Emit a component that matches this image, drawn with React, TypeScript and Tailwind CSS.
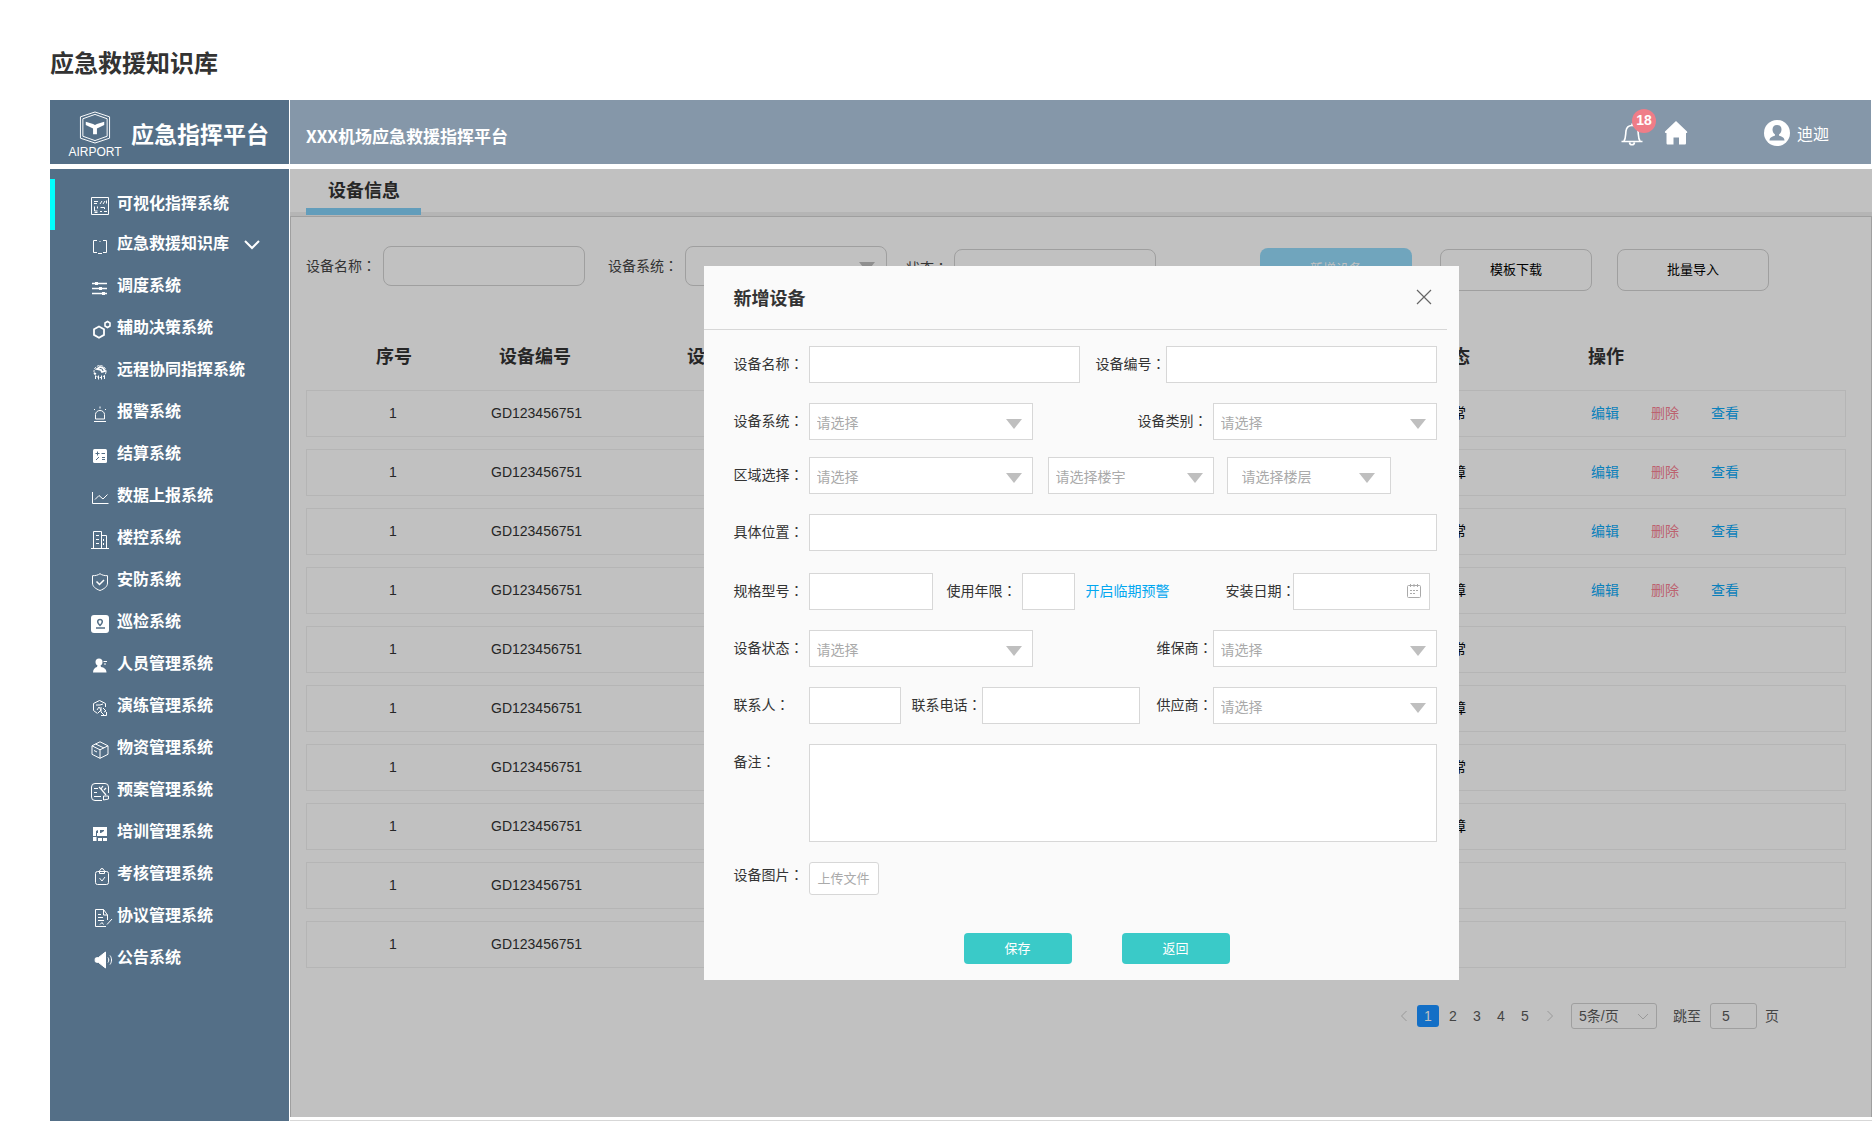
import React from "react";

type IconProps = { children: React.ReactNode; solid?: boolean };

function Icon({ children, solid }: IconProps) {
  return (
    <svg
      viewBox="0 0 18 18"
      className="size-[18px] shrink-0 overflow-visible"
      fill={solid ? "currentColor" : "none"}
      stroke={solid ? "none" : "currentColor"}
      strokeWidth="1"
      aria-hidden="true"
    >
      {children}
    </svg>
  );
}

const menus = [
  {
    name: "可视化指挥系统",
    icon: (
      <Icon>
        <path d="M.5.5h17v17H.5z" />
        <path d="M3 4.500h4M3 6.500h3M9 7l2-3M12 7l2-3M15.500 3.500v3M3.500 9.500v4.500h3M6.500 9.500v2M9.500 10.500h4v1.500M9 14.500h2M13 14.500h3M3.500 15.500h3" />
      </Icon>
    ),
  },
  {
    name: "应急救援知识库",
    open: true,
    icon: (
      <Icon>
        <path d="M6 3.500H2.500v12H6M12 3.500h3.500v12H12M7 16.500h4M8.500 4.500h1" />
      </Icon>
    ),
  },
  {
    name: "调度系统",
    icon: (
      <Icon>
        <path strokeWidth="1.500" d="M1 4.500h15M1 9.500h15M1 14.500h15" />
        <path strokeWidth="3" d="M4 4.500h3M8 9.500h3M11 14.500h3" />
      </Icon>
    ),
  },
  {
    name: "辅助决策系统",
    icon: (
      <Icon>
        <path strokeWidth="1.800" d="M8 5.500l5 2.800v5.600L8 16.700l-5-2.800V8.300z" />
        <path strokeWidth="1.600" d="M16.500.5l2.500 1.500v3l-2.500 1.500L14 5V2z" />
      </Icon>
    ),
  },
  {
    name: "远程协同指挥系统",
    icon: (
      <Icon>
        <circle cx="9" cy="8.500" r="6" strokeDasharray="2.500 1" />
        <path strokeWidth="1.800" d="M6 6l3-2 3 1 2 3-3 1-1-2zM3 10l2 1" />
        <path d="M4.500 13v3M7.500 12.500v4M10.500 12.500v4M13.500 13v3" />
      </Icon>
    ),
  },
  {
    name: "报警系统",
    icon: (
      <Icon>
        <path d="M3 16.500h12M4.500 14V9.500a4.500 4 0 0 1 9 0V14zM9 1.500v2M3 4l1 1M15 4l-1 1" />
      </Icon>
    ),
  },
  {
    name: "结算系统",
    icon: (
      <Icon>
        <rect x="2" y="2" width="14" height="14" rx="1.500" fill="currentColor" stroke="none" />
        <path stroke="#546f87" d="M4.500 6.500h4M6.500 4.500v4M10.500 6.500h3.500M5 13l3-3M11 10.500h3M11 12.500h3" />
      </Icon>
    ),
  },
  {
    name: "数据上报系统",
    icon: (
      <Icon>
        <path d="M1.500 3v11.500h16M4 10.500l4-4 4 3.500 4.500-4.500" />
      </Icon>
    ),
  },
  {
    name: "楼控系统",
    icon: (
      <Icon>
        <path d="M0 17.500h18M2.500 17V.5h8V17M10.500 4.500h5V17M5 4.500h3M5 8.500h3M5 12.500h3M12.500 8v2M12.500 12v2" />
      </Icon>
    ),
  },
  {
    name: "安防系统",
    icon: (
      <Icon>
        <path d="M9 .7c2 1.500 4.500 2 7.500 2V10c0 3.500-3 5.800-7.500 7.500C4.500 15.800 1.500 13.500 1.500 10V2.700c3 0 5.500-.5 7.500-2z" />
        <path strokeWidth="1.500" d="M5.500 8.500l3 3 4.500-4.500" />
      </Icon>
    ),
  },
  {
    name: "巡检系统",
    icon: (
      <Icon>
        <rect width="18" height="18" rx="3" fill="currentColor" stroke="none" />
        <path stroke="#546f87" strokeWidth="1.500" d="M9 10.500C5 6.500 7 4.500 9 4.500s4 2 0 6zM5 13h9" />
      </Icon>
    ),
  },
  {
    name: "人员管理系统",
    icon: (
      <Icon solid>
        <circle cx="8" cy="5" r="3.500" />
        <path d="M6.500 8h3l.5 2c3 .5 5.500 2 5.500 5.500H2C2 12 4 10.500 6 10zM12.500 4H16v1h-3.500zM13 6.500h2v1h-2z" />
      </Icon>
    ),
  },
  {
    name: "演练管理系统",
    icon: (
      <Icon>
        <path d="M14.500 8V4.500L8.500 1.500l-6 3v7l4 3M5 6h4l3-1M6 11l2-3 2 3-3 3M10 8v5l3 3M12 9l3 3-2 1M10 16.500h5.500V13" />
      </Icon>
    ),
  },
  {
    name: "物资管理系统",
    icon: (
      <Icon>
        <path d="M9 .8l8 4v8.500l-8 4-8-4V4.800zM1 4.800l8 4 8-4M9 8.800v8.500M4.500 3l8.500 4M3 9.500l3 1.500" />
      </Icon>
    ),
  },
  {
    name: "预案管理系统",
    icon: (
      <Icon>
        <path d="M11 17.500H4A3.500 3.500 0 0 1 .5 14V4A3.500 3.500 0 0 1 4 .5h10A3.500 3.500 0 0 1 17.500 4v6M3 5.500h4M3 9.500h3M3 13.500h7M12.500 17V13h5v3z" />
        <path strokeWidth="1.200" d="M8 4l3 3M12 3l-2 3 5 6M13 7l2-2" />
      </Icon>
    ),
  },
  {
    name: "培训管理系统",
    icon: (
      <Icon solid>
        <path fillRule="evenodd" d="M2 2h14v9H2zM5 6v5h1V8h1V5zM9 5h4v1l-3 2H9z" />
        <path d="M2 12h3.500v4H2zM7 13h4v3H7zM12 13h4v3h-4z" />
      </Icon>
    ),
  },
  {
    name: "考核管理系统",
    icon: (
      <Icon>
        <rect x="4.500" y="4.500" width="13" height="13" rx="2" />
        <path d="M8.500 6.500V4c0-1 1-1 1-1a1.500 1.500 0 0 1 3 0s1 0 1 1v2.500zM8.500 11l2.500 3 3-4" />
      </Icon>
    ),
  },
  {
    name: "协议管理系统",
    icon: (
      <Icon>
        <path d="M16.500 11V6L12.500.5h-8v17H15M12.500.5V6h4M7 5.500h3M7 8.500h5M7 11.500h6M9 15.500l2-2 1.500 2M16 15.500l5-5.500" />
      </Icon>
    ),
  },
  {
    name: "公告系统",
    icon: (
      <Icon>
        <path fill="currentColor" d="M4.500 7l3-.5 7-5.500v16l-7-5.500-3-.5c-.5-1-.5-3 0-4z" />
        <path d="M17 6.500c1 1.500 1 3.500 0 5M19 4.500c2 2.500 2 6.500 0 9" />
      </Icon>
    ),
  },
];

const rows = ["正常", "故障", "正常", "故障", "正常", "故障", "正常", "故障", "", ""];

function Label({ text, htmlFor, className = "" }: { text: string; htmlFor?: string; className?: string }) {
  return (
    <label htmlFor={htmlFor} className={`shrink-0 whitespace-nowrap pb-[3px] text-sm ${className}`}>
      {text}
      <span className="font-['Noto_Sans_CJK_JP',sans-serif]">：</span>
    </label>
  );
}

function TextBox({ id, className = "" }: { id: string; className?: string }) {
  return (
    <input
      id={id}
      type="text"
      className={`h-[37px] min-w-0 border border-[#d7d7d7] bg-white px-2 text-sm outline-none ${className}`}
    />
  );
}

type SelectBoxProps = { id: string; text?: string; label?: string; inset?: boolean; className?: string };

function SelectBox({ id, text = "请选择", label, inset, className = "" }: SelectBoxProps) {
  return (
    <div className={`relative h-[37px] shrink-0 ${className}`}>
      <select
        id={id}
        aria-label={label}
        className={`size-full appearance-none border border-[#d7d7d7] bg-white text-sm text-[#aaa] outline-none ${
          inset ? "px-[14px]" : "px-[7px]"
        }`}
      >
        <option>{text}</option>
      </select>
      <svg
        viewBox="0 0 16 10"
        className={`pointer-events-none absolute top-4 h-[10px] w-4 ${inset ? "right-4" : "right-[11px]"}`}
        aria-hidden="true"
      >
        <path d="M0 0h16L8 10z" fill="#bfbfbf" />
      </svg>
    </div>
  );
}

function Header() {
  return (
    <header className="flex h-16 gap-px pr-px text-white">
      <div className="flex w-[239px] shrink-0 items-center bg-[#546f87] pl-[18px]">
        <div className="flex w-[54px] flex-col items-center pt-[7px]">
          <svg viewBox="0 0 32 34" className="h-[33px] w-8" fill="none" stroke="currentColor" aria-hidden="true">
            <path strokeWidth="1" d="M16 1l15 5v22l-15 5-15-5V6z" />
            <path strokeWidth="1" d="M16 3.500l12.500 4.500v18L16 30.500 3.500 26V8z" />
            <path fill="currentColor" stroke="none" d="M6.500 11l7.500 2.500 2 1 2-1 7.500-2.500v3.500L18 18v6h-4v-6l-7.500-3.500z" />
          </svg>
          <span className="font-['Liberation_Sans',sans-serif] text-xs leading-[16px]">AIRPORT</span>
        </div>
        <span className="pl-[9px] pt-[3px] text-[23px] font-bold leading-none">应急指挥平台</span>
      </div>
      <div className="flex min-w-0 flex-1 items-center bg-[#8597a9] pl-4 pr-[42px] pt-[2px]">
        <h2 className="pt-[6px] text-[17px] font-bold">XXX机场应急救援指挥平台</h2>
        <button type="button" aria-label="消息" className="relative ml-auto size-[22px]">
          <svg viewBox="0 0 22 24" className="h-6 w-[22px]" fill="none" stroke="currentColor" strokeWidth="1.600" aria-hidden="true">
            <path d="M.5 19.500h21M3 19c2-3 1.500-7 2-10C5.500 5 8 3.500 11 3.500s5.500 1.500 6 5.500c.5 3 0 7 2 10M8.500 20.500c.5 3 4.500 3 5 0M11 1.500v2" />
          </svg>
          <span className="absolute -top-[13px] left-[11px] flex size-6 items-center justify-center rounded-full bg-[#ef7d88] pb-[2px] font-['Liberation_Sans',sans-serif] text-sm font-bold">
            18
          </span>
        </button>
        <a href="#home" aria-label="首页" className="ml-[21px]">
          <svg viewBox="0 0 24 24" className="size-6" fill="currentColor" aria-hidden="true">
            <path d="M12 0l11 10.500c.8 1-.2 1.500-1 1.500v10c0 1-.5 1.500-1.500 1.500H15v-7H9.500v7H4c-1 0-1.500-.5-1.500-1.500V12c-1 0-2-.5-1.500-1.500z" />
          </svg>
        </a>
        <a href="#user" className="ml-[76px] flex items-center gap-[7px] text-base">
          <svg viewBox="0 0 26 26" className="size-[26px]" aria-hidden="true">
            <circle cx="13" cy="13" r="13" fill="#fff" />
            <path fill="#8597a9" d="M13 5c3 0 4.500 2 4.500 4.500 0 2-1 4-2.500 5v1c2.500 1 5.500 2 5.500 5h-15c0-3 3-4 5.500-5v-1c-1.500-1-2.500-3-2.500-5C8.500 7 10 5 13 5z" />
          </svg>
          迪迦
        </a>
      </div>
    </header>
  );
}

function Sidebar() {
  return (
    <nav className="relative w-[239px] shrink-0 bg-[#546f87] pb-20 pt-[14px] text-white">
      <span className="absolute left-0 top-[10px] h-[51px] w-[5px] bg-[#00ffff]" />
      <ul>
        {menus.map((item, i) => (
          <li key={item.name} className={i === 0 ? "h-10" : "h-[42px]"}>
            <a href={`#menu-${i}`} className="flex h-10 items-center pl-[41px] text-base font-bold">
              <span className="pt-[5px]">{item.icon}</span>
              <span className="pb-[2px] pl-2">{item.name}</span>
              {item.open && (
                <svg viewBox="0 0 16 10" className="ml-[15px] mt-1 h-[10px] w-4" fill="none" stroke="currentColor" strokeWidth="2" aria-hidden="true">
                  <path d="M1 1l7 7 7-7" />
                </svg>
              )}
            </a>
          </li>
        ))}
      </ul>
    </nav>
  );
}

function Filters() {
  return (
    <div className="flex h-[45px] items-start pl-[15px]">
      <div className="flex h-10 items-center">
        <Label text="设备名称" htmlFor="q-name" className="w-[77px]" />
        <input id="q-name" type="text" className="h-10 w-[202px] rounded-lg border border-[#9f9f9f] px-2 text-sm" />
        <Label text="设备系统" htmlFor="q-system" className="ml-[23px] w-[77px]" />
        <div className="relative h-10 w-[202px]">
          <select id="q-system" className="size-full appearance-none rounded-lg border border-[#9f9f9f]">
            <option></option>
          </select>
          <svg viewBox="0 0 16 10" className="absolute right-3 top-4 h-[10px] w-4" aria-hidden="true">
            <path d="M0 0h16L8 10z" fill="#8f8f8f" />
          </svg>
        </div>
        <Label text="状态" htmlFor="q-status" className="ml-[19px] w-12 pt-1" />
      </div>
      <input id="q-status" type="text" className="mt-[3px] h-10 w-[202px] rounded-lg border border-[#9f9f9f] px-2 text-sm" />
      <div className="ml-[104px] mt-[3px] flex gap-[25px] text-[13px] text-black">
        <button type="button" className="-mt-px mr-[3px] h-[42px] w-[152px] rounded-lg bg-[#70a5bd] pb-[3px] text-[#c1c1c1]">
          新增设备
        </button>
        <button type="button" className="h-[42px] w-[152px] rounded-lg border border-[#9f9f9f] pb-[2px]">模板下载</button>
        <button type="button" className="h-[42px] w-[152px] rounded-lg border border-[#9f9f9f] pb-[2px]">批量导入</button>
      </div>
    </div>
  );
}

function DeviceTable() {
  return (
    <table className="ml-[15px] mr-[25px] mt-[37px] block text-sm text-[#262626]">
      <thead className="block">
        <tr className="flex h-[62px] items-center pb-[9px] text-left text-lg">
          <th className="w-[193px] pl-[70px]">序号</th>
          <th className="w-[188px]">设备编号</th>
          <th className="w-[747px]">设备</th>
          <th className="w-[154px]">状态</th>
          <th>操作</th>
        </tr>
      </thead>
      <tbody className="flex flex-col gap-3">
        {rows.map((status, i) => (
          <tr
            key={i}
            className="flex h-[47px] items-center border border-[#b5b5b5] pb-[2px] font-['Liberation_Sans','Noto_Sans_CJK_SC',sans-serif]"
          >
            <td className="w-[184px] pl-[82px]">1</td>
            <td className="w-[947px]">GD123456751</td>
            <td className="w-[153px] text-black">{status}</td>
            <td className="flex gap-8">
              {i < 4 && (
                <>
                  <a href="#edit" className="text-[#0a80bb]">编辑</a>
                  <a href="#delete" className="text-[#bc6270]">删除</a>
                  <a href="#view" className="text-[#0a80bb]">查看</a>
                </>
              )}
            </td>
          </tr>
        ))}
      </tbody>
    </table>
  );
}

function Pagination() {
  return (
    <div className="mt-[35px] flex h-[26px] items-center justify-end pr-[92px] font-['Liberation_Sans','Noto_Sans_CJK_SC',sans-serif] text-sm text-[#444]">
      <button type="button" aria-label="上一页">
        <svg viewBox="0 0 8 12" className="h-3 w-2" fill="none" stroke="#999" aria-hidden="true">
          <path d="M6.500 1L1.500 6l5 5" />
        </svg>
      </button>
      <button type="button" className="ml-[9px] size-[22px] rounded-[3px] bg-[#136fc6] text-[#c1c1c1]">1</button>
      <div className="ml-[2px] flex">
        {[2, 3, 4, 5].map((n) => (
          <button key={n} type="button" className="w-6">{n}</button>
        ))}
      </div>
      <button type="button" aria-label="下一页" className="ml-[9px]">
        <svg viewBox="0 0 8 12" className="h-3 w-2" fill="none" stroke="#999" aria-hidden="true">
          <path d="M1.500 1l5 5-5 5" />
        </svg>
      </button>
      <div className="relative ml-[17px] h-[26px] w-[86px]">
        <select aria-label="每页条数" className="size-full appearance-none rounded-[3px] border border-[#9f9f9f] pl-[7px] text-sm">
          <option>5条/页</option>
        </select>
        <svg viewBox="0 0 12 8" className="pointer-events-none absolute right-2 top-[10px] h-2 w-3" fill="none" stroke="#999" aria-hidden="true">
          <path d="M1 1l5 5 5-5" />
        </svg>
      </div>
      <label htmlFor="page-no" className="ml-4">跳至</label>
      <input id="page-no" type="text" defaultValue="5" className="ml-[9px] mr-2 h-[26px] w-[47px] rounded-[3px] border border-[#9f9f9f] pl-[11px]" />
      <span>页</span>
    </div>
  );
}

function DeviceModal() {
  return (
    <section role="dialog" aria-label="新增设备" className="h-fit w-[755px] bg-[#fafafa] pb-4 text-[#333]">
      <div className="mr-3 flex h-16 items-center justify-between border-b border-[#d7d7d7] pb-[2px] pl-[30px] pr-[15px]">
        <h3 className="text-lg font-bold">新增设备</h3>
        <button type="button" aria-label="关闭">
          <svg viewBox="0 0 16 16" className="size-4" fill="none" stroke="#666" strokeWidth="1.200" aria-hidden="true">
            <path d="M1 1l14 14M15 1L1 15" />
          </svg>
        </button>
      </div>
      <form className="pl-[30px] pr-[22px] pt-4">
        <div className="flex items-center">
          <Label text="设备名称" htmlFor="name" className="w-[75px]" />
          <TextBox id="name" className="flex-1" />
          <Label text="设备编号" htmlFor="code" className="ml-4" />
          <TextBox id="code" className="flex-1" />
        </div>
        <div className="mt-5 flex items-center">
          <Label text="设备系统" htmlFor="system" className="w-[75px]" />
          <SelectBox id="system" className="w-56" />
          <Label text="设备类别" htmlFor="category" className="ml-auto w-[75px]" />
          <SelectBox id="category" className="w-56" />
        </div>
        <div className="mt-[17px] flex items-center">
          <Label text="区域选择" htmlFor="area" className="w-[75px]" />
          <SelectBox id="area" className="w-56" />
          <SelectBox id="building" text="请选择楼宇" label="楼宇" className="ml-[15px] w-[166px]" />
          <SelectBox id="floor" text="请选择楼层" label="楼层" inset className="ml-[13px] w-[164px]" />
        </div>
        <div className="mt-5 flex items-center">
          <Label text="具体位置" htmlFor="place" className="w-[75px]" />
          <TextBox id="place" className="flex-1" />
        </div>
        <div className="mt-[22px] flex items-center pr-[7px]">
          <Label text="规格型号" htmlFor="model" className="w-[75px]" />
          <TextBox id="model" className="w-[124px]" />
          <Label text="使用年限" htmlFor="years" className="ml-[14px] w-[75px]" />
          <TextBox id="years" className="w-[53px]" />
          <a href="#warning" className="ml-[11px] pb-[3px] text-sm text-[#02a7f0]">开启临期预警</a>
          <Label text="安装日期" htmlFor="date" className="ml-auto w-[67px]" />
          <div className="relative">
            <TextBox id="date" className="block w-[137px]" />
            <svg viewBox="0 0 16 16" className="absolute right-2 top-[10px] size-4" fill="none" stroke="#aaa" aria-hidden="true">
              <rect x="1.500" y="2.500" width="13" height="12" rx="1" />
              <path d="M4.500 1v3M8 1v3M11.500 1v3M4 7.500h2M7 7.500h2M10 7.500h2M4 10.500h2M7 10.500h2" />
            </svg>
          </div>
        </div>
        <div className="mt-5 flex items-center">
          <Label text="设备状态" htmlFor="status" className="w-[75px]" />
          <SelectBox id="status" className="w-56" />
          <Label text="维保商" htmlFor="maintainer" className="ml-auto" />
          <SelectBox id="maintainer" className="w-56" />
        </div>
        <div className="mt-5 flex items-center">
          <Label text="联系人" htmlFor="contact" className="w-[75px]" />
          <TextBox id="contact" className="w-[92px]" />
          <Label text="联系电话" htmlFor="phone" className="ml-[11px]" />
          <TextBox id="phone" className="w-[158px]" />
          <Label text="供应商" htmlFor="supplier" className="ml-auto" />
          <SelectBox id="supplier" className="w-56" />
        </div>
        <div className="mt-5 flex">
          <Label text="备注" htmlFor="remark" className="w-[75px] pt-[7px]" />
          <textarea id="remark" className="h-[98px] flex-1 resize-none border border-[#d7d7d7] bg-white p-2 text-sm outline-none" />
        </div>
        <div className="mt-5 flex">
          <Label text="设备图片" className="w-[75px] pt-[2px]" />
          <button type="button" className="h-[33px] w-[70px] rounded-[3px] border border-[#d7d7d7] bg-white pb-[2px] text-[13px] text-[#aaa]">
            上传文件
          </button>
        </div>
        <div className="mt-[38px] flex justify-center gap-[50px] pl-[23px] text-[13px] text-white">
          <button type="button" className="h-[31px] w-[108px] rounded bg-[#3acac8] pb-[2px]">保存</button>
          <button type="button" className="h-[31px] w-[108px] rounded bg-[#3acac8] pb-[2px]">返回</button>
        </div>
      </form>
    </section>
  );
}

function App() {
  return (
    <div className="flex min-h-screen flex-col overflow-x-hidden bg-white pl-[50px] font-['Noto_Sans_CJK_SC','Noto_Sans',sans-serif] text-[#333]">
      <h1 className="flex h-[100px] items-center pt-6 text-2xl font-bold">应急救援知识库</h1>
      <Header />
      <div className="mt-[5px] flex flex-1 gap-px">
        <Sidebar />
        <main className="relative min-w-0 flex-1 border-b border-[#d7d7d7] pb-[3px]">
          <div className="flex h-full flex-col bg-[#c1c1c1]">
            <div className="flex h-[47px] items-start border-b-4 border-[#b5b5b5] pl-4">
              <h2 className="-mb-1 h-[46px] w-[115px] border-b-[7px] border-[#629dbb] pl-[22px] pt-[6px] text-lg font-bold text-[#262626]">
                设备信息
              </h2>
            </div>
            <div className="flex-1 border border-b-0 border-[#9f9f9f] pt-[29px]">
              <Filters />
              <DeviceTable />
              <Pagination />
            </div>
          </div>
          <div className="absolute inset-x-0 top-[97px] flex justify-center">
            <DeviceModal />
          </div>
        </main>
      </div>
    </div>
  );
}

export default App;
